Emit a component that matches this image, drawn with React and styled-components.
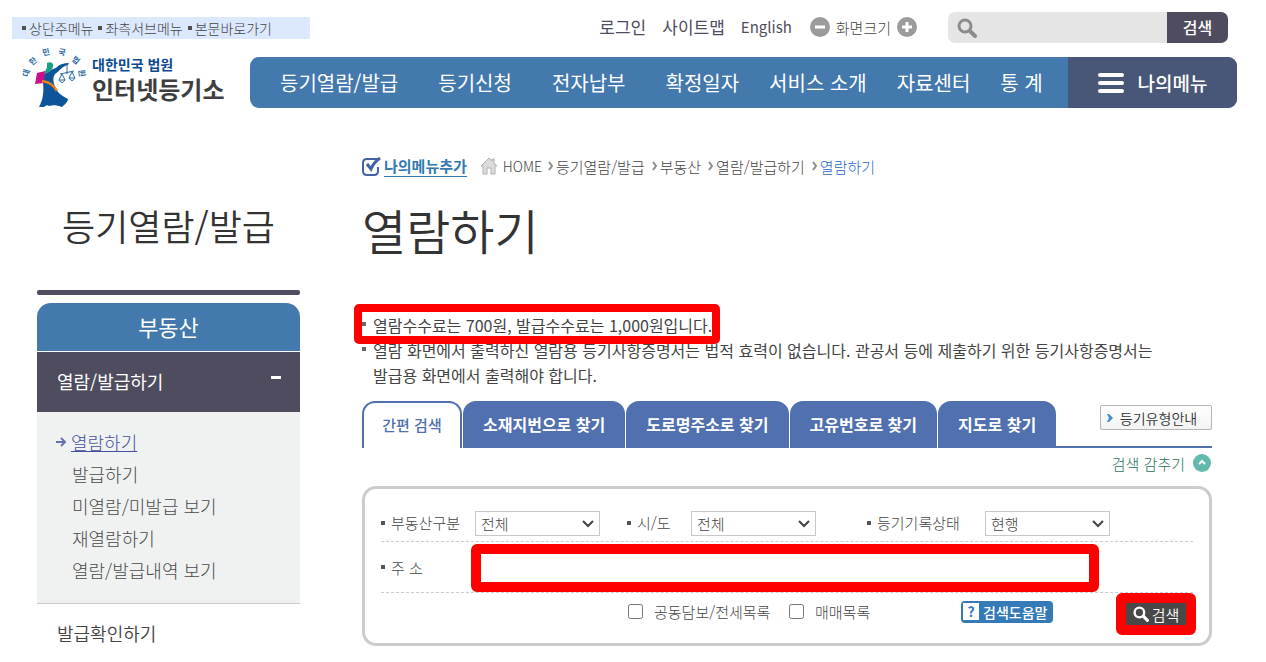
import React, { useState } from 'react'
import styled, { createGlobalStyle } from 'styled-components'

const topMenu = [
    { name: '등기열람/발급' },
    { name: '등기신청', wide: true },
    { name: '전자납부', wide: true },
    { name: '확정일자', wide: true },
    { name: '서비스 소개' },
    { name: '자료센터' },
    { name: '통 계' },
]

const sideMenu = ['열람하기', '발급하기', '미열람/미발급 보기', '재열람하기', '열람/발급내역 보기']

const crumbs = ['등기열람/발급', '부동산', '열람/발급하기', '열람하기']

const tabs = ['간편 검색', '소재지번으로 찾기', '도로명주소로 찾기', '고유번호로 찾기', '지도로 찾기']

function Magnifier({ size, color, thick }) {
    return (
        <svg width={size} height={size} viewBox="0 0 20 20" fill="none" stroke={color} aria-hidden="true">
            <circle cx="8" cy="8" r="6" strokeWidth={thick} />
            <path d="M12.8 12.8 L18 18" strokeWidth={thick + 1} strokeLinecap="round" />
        </svg>
    )
}

function RoundIcon({ plus }) {
    return (
        <svg width="20" height="20" viewBox="0 0 20 20" aria-hidden="true">
            <circle cx="10" cy="10" r="10" fill="#9b9b9b" />
            <path d={plus ? 'M5 10 H15 M10 5 V15' : 'M5 10 H15'} stroke="#fff" strokeWidth="3" />
        </svg>
    )
}

function LogoMark() {
    return (
        <svg width="70" height="62" viewBox="0 0 70 62" overflow="visible" aria-hidden="true">
            <g fill="#2c6ba5" fontSize="8" fontWeight="700" textAnchor="middle">
                <text transform="translate(4 27) rotate(-75)" y="3">대</text>
                <text transform="translate(11 15) rotate(-40)" y="3">한</text>
                <text transform="translate(24 6) rotate(-12)" y="3">민</text>
                <text transform="translate(40 6) rotate(12)" y="3">국</text>
                <text transform="translate(54 14) rotate(40)" y="3">법</text>
                <text transform="translate(60 27) rotate(80)" y="3">원</text>
            </g>
            {/* robe */}
            <path d="M21 28 C24 27 26 27 29 24 C32 22 33 23 35 21 C38 18 42 17 47 17 L46 19 C40 20 38 25 33 28 C31 31 31 34 32 38 C34 46 40 50 46 53 C46 56 42 59 40 61 C35 59 30 59 27 60 C25 58 23 60 22 61 H17 C21 54 22 46 21 36 Z" fill="#0d559b" />
            {/* law book and sash */}
            <path d="M15 27 L23 25 L22 37 L13 38 Z" fill="#c9108a" />
            <path d="M20 35 C27 36 32 39 35 45" fill="none" stroke="#ee8222" strokeWidth="2.5" />
            <path d="M25 17 C28 15 32 17 31 20 C31 23 29 23 29 25 L23 28 C22 25 25 23 25 21 Z" fill="#19a085" />
            {/* scales */}
            <g fill="none" stroke="#2c6ba5" strokeWidth="1">
                <path d="M45 18 V28 M38 28 L52 25 M40 28 L37 34 M40 28 L43 34 M50 26 L47 32 M50 26 L53 32" />
                <path d="M37 34 H43 Q40 39 37 34 M47 32 H53 Q50 37 47 32" fill="#fff" />
            </g>
        </svg>
    )
}

function SelectField({ id, value }) {
    return (
        <SelectBox>
            <Select id={id}><option>{value}</option></Select>
            <svg width="12" height="8" viewBox="0 0 12 8" fill="none" stroke="#444" strokeWidth="2" aria-hidden="true">
                <path d="M1 1 L6 6 L11 1" />
            </svg>
        </SelectBox>
    )
}

function App() {
    const [tab, setTab] = useState(0)

    return (
        <Page lang="ko">
            <GlobalStyle />
            <TopBar>
                <SkipLinks>
                    <a href="#top">상단주메뉴</a>
                    <a href="#side">좌측서브메뉴</a>
                    <a href="#main">본문바로가기</a>
                </SkipLinks>
                <Util>
                    <UtilLink href="#login">로그인</UtilLink>
                    <UtilLink href="#sitemap">사이트맵</UtilLink>
                    <UtilLink href="#english" $latin>English</UtilLink>
                    <ZoomTool>
                        <IconButton type="button" aria-label="축소"><RoundIcon /></IconButton>
                        <span>화면크기</span>
                        <IconButton type="button" aria-label="확대"><RoundIcon plus /></IconButton>
                    </ZoomTool>
                    <SiteSearch>
                        <Magnifier size={20} color="#8c8c8c" thick={3} />
                        <input type="text" aria-label="사이트 검색" />
                        <button type="button">검색</button>
                    </SiteSearch>
                </Util>
            </TopBar>

            <Header>
                <Logo href="#home">
                    <LogoMark />
                    <LogoText>
                        <small>대한민국 법원</small>
                        <strong>인터넷등기소</strong>
                    </LogoText>
                </Logo>
                <Nav id="top">
                    <NavList>
                        {topMenu.map((item) => (
                            <NavItem key={item.name} $wide={item.wide}><a href="#menu">{item.name}</a></NavItem>
                        ))}
                    </NavList>
                    <MyMenu type="button">
                        <svg width="26" height="20" viewBox="0 0 26 20" aria-hidden="true">
                            <path d="M2 2 H24 M2 10 H24 M2 18 H24" stroke="#fff" strokeWidth="4" strokeLinecap="round" />
                        </svg>
                        나의메뉴
                    </MyMenu>
                </Nav>
            </Header>

            <Body>
                <Side id="side">
                    <SideTitle>등기열람/발급</SideTitle>
                    <SideBar />
                    <SideHead>부동산</SideHead>
                    <SideOpen type="button">열람/발급하기<i /></SideOpen>
                    <SideList>
                        {sideMenu.map((name, i) => (
                            <SideItem key={name} $active={i === 0}>
                                {i === 0 && (
                                    <svg width="11" height="10" viewBox="0 0 11 10" fill="none" stroke="#6570b5" strokeWidth="2" aria-hidden="true">
                                        <path d="M0 5 H9 M5 1 L9 5 L5 9" />
                                    </svg>
                                )}
                                <a href="#sub">{name}</a>
                            </SideItem>
                        ))}
                    </SideList>
                    <SideLink href="#check">발급확인하기</SideLink>
                </Side>

                <Main id="main">
                    <Crumbs>
                        <AddMenu href="#add">
                            <svg width="20" height="19" viewBox="0 0 20 19" fill="none" aria-hidden="true">
                                <path d="M15 2 H5 Q1 2 1 6 V14 Q1 18 5 18 H12 Q16 18 16 14 V10" stroke="#4561a5" strokeWidth="2" />
                                <path d="M5 7 L9 12 Q12 5 18 1" stroke="#4561a5" strokeWidth="3" />
                            </svg>
                            <span>나의메뉴추가</span>
                        </AddMenu>
                        <svg width="18" height="18" viewBox="0 0 18 18" aria-hidden="true">
                            <path d="M9 1 L1 9 H3 V17 H7 V11 H11 V17 H15 V9 H17 L14 6 V2 H12 V4 Z" fill="#dcdcdc" stroke="#b0b0b0" />
                        </svg>
                        <HomeLink href="#home">HOME</HomeLink>
                        {crumbs.map((name, i) => (
                            <Crumb key={name} $last={i === crumbs.length - 1}>
                                <svg width="6" height="10" viewBox="0 0 6 10" fill="none" stroke="#8a8a8a" strokeWidth="2" aria-hidden="true">
                                    <path d="M1 1 L4 5 L1 9" />
                                </svg>
                                <a href="#crumb">{name}</a>
                            </Crumb>
                        ))}
                    </Crumbs>
                    <Title>열람하기</Title>

                    <Notices>
                        <li>
                            열람수수료는 700원, 발급수수료는 1,000원입니다.
                            <NoticeMark />
                        </li>
                        <li>
                            열람 화면에서 출력하신 열람용 등기사항증명서는 법적 효력이 없습니다. 관공서 등에 제출하기 위한 등기사항증명서는
                            <br />
                            발급용 화면에서 출력해야 합니다.
                        </li>
                    </Notices>

                    <TabBar>
                        {tabs.map((name, i) => (
                            <Tab key={name} type="button" $active={tab === i} onClick={() => setTab(i)}>{name}</Tab>
                        ))}
                        <TabRest>
                            <GuideButton type="button">
                                <svg width="6" height="8" viewBox="0 0 6 8" aria-hidden="true">
                                    <path d="M0 0 H2 L6 4 L2 8 H0 L2 4 Z" fill="#3f8fca" />
                                </svg>
                                등기유형안내
                            </GuideButton>
                        </TabRest>
                    </TabBar>

                    <FoldButton type="button">
                        검색 감추기
                        <svg width="18" height="18" viewBox="0 0 18 18" aria-hidden="true">
                            <circle cx="9" cy="9" r="9" fill="#62b8ad" />
                            <path d="M6 10 L9 7 L12 10" fill="none" stroke="#fff" strokeWidth="2" />
                        </svg>
                    </FoldButton>

                    <Panel onSubmit={(e) => e.preventDefault()}>
                        <Row>
                            <Label htmlFor="kind">부동산구분</Label>
                            <SelectField id="kind" value="전체" />
                            <Label htmlFor="sido">시/도</Label>
                            <SelectField id="sido" value="전체" />
                            <Label htmlFor="state">등기기록상태</Label>
                            <SelectField id="state" value="현행" />
                        </Row>
                        <AddressRow>
                            <Label htmlFor="address">주 소</Label>
                            <Address id="address" type="text" />
                        </AddressRow>
                        <OptionRow>
                            <Check>
                                <input type="checkbox" />
                                공동담보/전세목록
                            </Check>
                            <Check>
                                <input type="checkbox" />
                                매매목록
                            </Check>
                            <HelpButton type="button"><b>?</b>검색도움말</HelpButton>
                            <SearchMark>
                                <SearchButton type="submit">
                                    <Magnifier size={16} color="#fff" thick={3} />
                                    검색
                                </SearchButton>
                            </SearchMark>
                        </OptionRow>
                    </Panel>
                </Main>
            </Body>
        </Page>
    )
}

const GlobalStyle = createGlobalStyle`
    * {
        box-sizing: border-box;
    }
    body {
        margin: 0;
        background: #fff;
    }
    body, button, input, select {
        font-family: "Noto Sans CJK KR", sans-serif;
    }
    a {
        color: inherit;
        text-decoration: none;
    }
    ul, h1, h2, h3 {
        margin: 0;
        padding: 0;
        list-style: none;
        font-weight: 350;
    }
    button {
        margin: 0;
        padding: 0;
        border: 0;
        background: none;
        cursor: pointer;
    }
    svg {
        display: block;
        flex: none;
    }
`

const Page = styled.div`
    padding: 0 29px 0 12px;
    color: #444;
    white-space: nowrap;
`

const TopBar = styled.div`
    display: flex;
    justify-content: space-between;
    height: 47px;
    padding: 12px 9px 0 0;
`

const SkipLinks = styled.div`
    display: flex;
    align-items: center;
    gap: 5px;
    width: 298px;
    height: 22px;
    margin-top: 5px;
    padding-left: 10px;
    background: #dbe8fe;
    font-size: 14px;
    font-weight: 300;
    a {
        display: flex;
        align-items: center;
        gap: 3px;
    }
    a::before {
        content: '';
        width: 4px;
        height: 4px;
        background: #505050;
    }
`

const Util = styled.div`
    display: flex;
    align-items: center;
    height: 31px;
`

const UtilLink = styled.a`
    margin: 0 16px 3px 0;
    font-size: ${({ $latin }) => ($latin ? '15px' : '17px')};
    color: #4e4c5e;
`

const ZoomTool = styled.div`
    display: flex;
    align-items: center;
    gap: 6px;
    margin: 0 31px 1px 2px;
    font-size: 15px;
    font-weight: 300;
`

const IconButton = styled.button`
    width: 20px;
    height: 20px;
`

const SiteSearch = styled.div`
    display: flex;
    align-items: center;
    height: 31px;
    padding-left: 9px;
    border-radius: 7px;
    background: #e5e5e5;
    overflow: hidden;
    input {
        width: 190px;
        height: 31px;
        border: 0;
        background: transparent;
    }
    button {
        width: 61px;
        height: 31px;
        padding-bottom: 2px;
        background: #4e4c5e;
        color: #fff;
        font-size: 16px;
        font-weight: 500;
    }
`

const Header = styled.header`
    display: flex;
    align-items: flex-end;
    height: 61px;
`

const Logo = styled.a`
    display: flex;
    align-items: flex-end;
    width: 238px;
    padding-left: 10px;
`

const LogoText = styled.span`
    display: flex;
    flex-direction: column;
    height: 54px;
    small {
        font-size: 14px;
        line-height: 20px;
        font-weight: 700;
        color: #0c4a91;
    }
    strong {
        font-size: 24px;
        line-height: 30px;
        font-weight: 700;
        color: #3e3e3e;
    }
`

const Nav = styled.nav`
    display: flex;
    flex: 1;
    height: 51px;
    border-radius: 9px;
    background: #4479ae;
    overflow: hidden;
`

const NavList = styled.ul`
    display: flex;
    align-items: center;
    flex: 1;
`

const NavItem = styled.li`
    margin-left: ${({ $wide }) => ($wide ? '40px' : '30px')};
    font-size: 20px;
    font-weight: 400;
    color: #fff;
`

const MyMenu = styled.button`
    display: flex;
    align-items: center;
    justify-content: center;
    gap: 14px;
    width: 169px;
    background: #485677;
    color: #fff;
    font-size: 19px;
    font-weight: 500;
`

const Body = styled.div`
    display: flex;
    gap: 62px;
    padding: 0 25px;
`

const Side = styled.aside`
    flex: none;
    width: 263px;
`

const SideTitle = styled.h2`
    padding: 90px 0 38px;
    font-size: 36px;
    line-height: 54px;
    text-align: center;
    color: #333;
`

const SideBar = styled.div`
    height: 5px;
    margin-bottom: 8px;
    border-radius: 2px;
    background: #4e4c5e;
`

const SideHead = styled.h3`
    height: 48px;
    border-radius: 14px 14px 0 0;
    background: #4479ae;
    color: #fff;
    font-size: 22px;
    font-weight: 400;
    line-height: 46px;
    text-align: center;
`

const SideOpen = styled.button`
    display: flex;
    align-items: center;
    justify-content: space-between;
    width: 100%;
    height: 60px;
    margin-top: 1px;
    padding: 0 19px 2px 20px;
    background: #4e4c5e;
    color: #fff;
    font-size: 18px;
    i {
        width: 10px;
        height: 3px;
        margin-bottom: 8px;
        background: #fff;
    }
`

const SideList = styled.ul`
    padding: 14px 0 17px 35px;
    border-bottom: 1px solid #ccc;
    background: #f0f2f1;
`

const SideItem = styled.li`
    display: flex;
    align-items: center;
    gap: 4px;
    height: 32px;
    margin-left: ${({ $active }) => ($active ? '-16px' : '0')};
    font-size: 18px;
    font-weight: 300;
    color: ${({ $active }) => ($active ? '#4550a0' : '#4a4a4a')};
    a {
        text-decoration: ${({ $active }) => ($active ? 'underline' : 'none')};
    }
`

const SideLink = styled.a`
    display: block;
    padding-left: 20px;
    font-size: 18px;
    font-weight: 350;
    line-height: 58px;
`

const Main = styled.main`
    flex: 1;
    min-width: 0;
`

const Crumbs = styled.div`
    display: flex;
    align-items: center;
    height: 24px;
    margin-top: 46px;
`

const AddMenu = styled.a`
    display: flex;
    align-items: center;
    gap: 2px;
    margin-right: 13px;
    font-size: 15px;
    font-weight: 700;
    line-height: 20px;
    color: #337ab0;
    span {
        border-bottom: 1px solid #337ab0;
    }
`

const HomeLink = styled.a`
    margin: 0 6px 0 5px;
    font-size: 14px;
    font-weight: 300;
`

const Crumb = styled.span`
    display: flex;
    align-items: center;
    gap: 2px;
    margin-right: 7px;
    font-size: 15px;
    font-weight: 300;
    color: ${({ $last }) => ($last ? '#2a6acb' : 'inherit')};
`

const Title = styled.h1`
    padding: 18px 0 51px;
    font-size: 48px;
    line-height: 66px;
    color: #333;
`

const Notices = styled.ul`
    font-size: 16px;
    line-height: 25px;
    li {
        position: relative;
        padding-left: 11px;
        font-weight: 400;
    }
    li::before {
        content: '';
        position: absolute;
        top: 9px;
        left: 0;
        width: 4px;
        height: 4px;
        background: #666;
    }
`

// red marker drawn over the fee line
const NoticeMark = styled.span`
    position: absolute;
    z-index: 1;
    top: -9px;
    left: -8px;
    width: 366px;
    height: 40px;
    border: 8px solid #f00;
    border-radius: 5px;
    pointer-events: none;
`

const TabBar = styled.div`
    display: flex;
    height: 47px;
    margin-top: 13px;
`

const Tab = styled.button`
    min-width: 100px;
    height: 47px;
    margin-right: 1px;
    padding: 0 18px 2px;
    border: 2px solid #5170af;
    border-bottom-width: ${({ $active }) => ($active ? '0' : '2px')};
    border-radius: 13px 13px 0 0;
    background: ${({ $active }) => ($active ? '#fff' : '#5170af')};
    color: ${({ $active }) => ($active ? '#5170af' : '#fff')};
    font-size: ${({ $active }) => ($active ? '15px' : '16px')};
    font-weight: ${({ $active }) => ($active ? '500' : '700')};
`

const TabRest = styled.div`
    display: flex;
    flex: 1;
    align-items: flex-start;
    justify-content: flex-end;
    margin-left: -1px;
    padding-top: 4px;
    border-bottom: 2px solid #5170af;
`

const GuideButton = styled.button`
    display: flex;
    align-items: center;
    justify-content: center;
    gap: 7px;
    width: 112px;
    height: 25px;
    padding-right: 8px;
    border: 1px solid #b5b5b5;
    border-radius: 2px;
    background: linear-gradient(#fff, #f3f3f3);
    color: #333;
    font-size: 14px;
    font-weight: 350;
`

const FoldButton = styled.button`
    display: flex;
    align-items: center;
    gap: 8px;
    height: 30px;
    margin: 0 1px 8px auto;
    color: #1f6f5b;
    font-size: 15px;
    font-weight: 300;
`

const Panel = styled.form`
    height: 160px;
    padding: 15px 16px 0;
    border: 3px solid #ccc;
    border-radius: 14px;
    font-size: 15px;
`

const Row = styled.div`
    display: grid;
    grid-template-columns: 94px 152px 64px 176px 118px 1fr;
    align-items: center;
    height: 38px;
    border-bottom: 1px dashed #ccc;
`

const AddressRow = styled(Row)`
    grid-template-columns: 90px 628px;
    height: 51px;
`

const OptionRow = styled.div`
    display: grid;
    grid-template-columns: 161px 172px 155px 80px;
    grid-template-rows: 37px;
    align-items: center;
    padding-left: 247px;
`

const Label = styled.label`
    display: flex;
    align-items: center;
    gap: 6px;
    font-weight: 300;
    &::before {
        content: '';
        width: 4px;
        height: 4px;
        background: #555;
    }
`

const SelectBox = styled.div`
    position: relative;
    width: 125px;
    margin-top: 2px;
    svg {
        position: absolute;
        top: 9px;
        right: 6px;
        pointer-events: none;
    }
`

const Select = styled.select`
    display: block;
    width: 100%;
    height: 25px;
    padding: 0 20px 0 5px;
    border: 1px solid #c8c8c8;
    border-radius: 0;
    background: #fff;
    color: #444;
    font-size: 15px;
    font-weight: 300;
    appearance: none;
`

const Address = styled.input`
    align-self: end;
    height: 48px;
    border: 10px solid #f00;
    border-radius: 6px;
    background: #fff;
    font-size: 15px;
`

const Check = styled.label`
    display: flex;
    align-items: center;
    gap: 11px;
    font-weight: 300;
    input {
        width: 15px;
        height: 15px;
        margin: 0;
    }
`

const HelpButton = styled.button`
    display: flex;
    align-items: center;
    gap: 4px;
    width: 92px;
    height: 22px;
    padding-left: 2px;
    border-radius: 4px;
    background: #337ab7;
    color: #fff;
    font-size: 14px;
    font-weight: 500;
    b {
        width: 16px;
        background: #fff;
        color: #337ab7;
        line-height: 17px;
    }
`

const SearchMark = styled.div`
    align-self: start;
    height: 42px;
    border: 10px solid #f00;
    border-radius: 6px;
`

const SearchButton = styled.button`
    display: flex;
    align-items: center;
    justify-content: center;
    gap: 3px;
    width: 60px;
    height: 22px;
    background: #484848;
    color: #fff;
    font-size: 15px;
    font-weight: 350;
`

export default App
